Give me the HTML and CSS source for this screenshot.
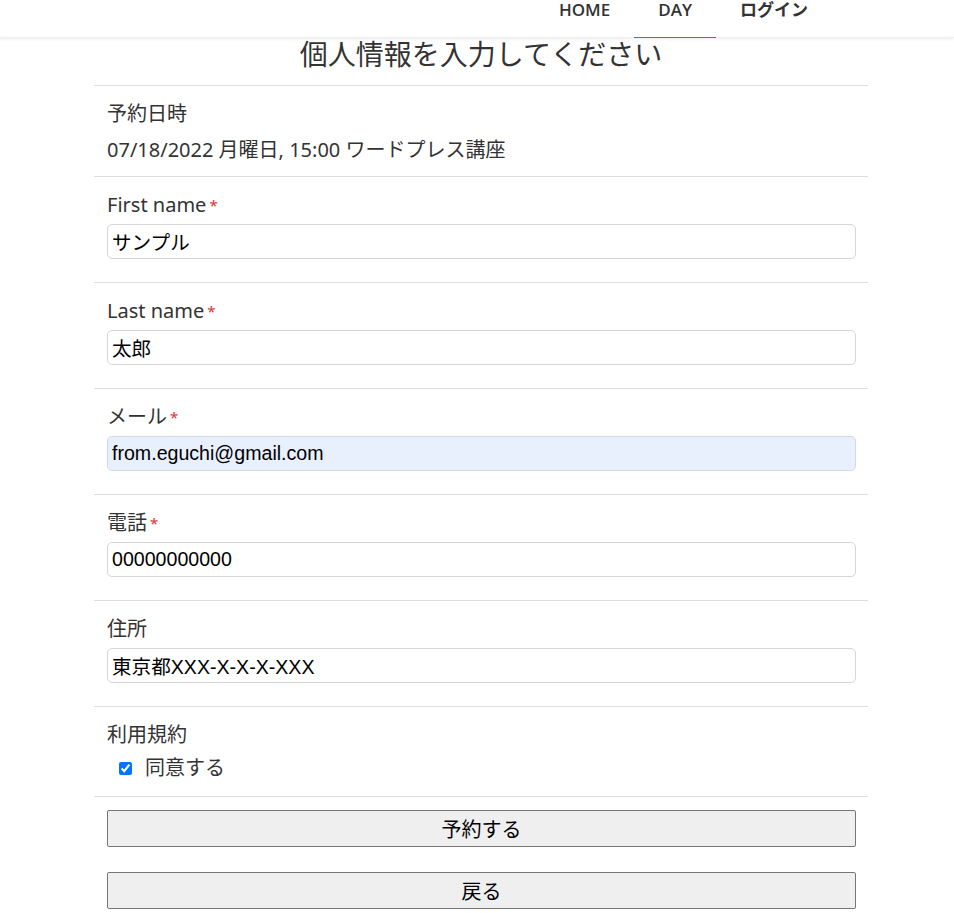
FILE: index.html
```html
<!DOCTYPE html>
<html lang="ja">
<head>
<meta charset="utf-8">
<title>個人情報を入力してください</title>
<link rel="stylesheet" href="styles.css">
</head>
<body>
<header class="site-header">
  <nav class="nav">
    <a class="nav-link" href="#">HOME</a>
    <a class="nav-link active" href="#">DAY</a>
    <a class="nav-link" href="#">ログイン</a>
  </nav>
</header>
<main class="page">
  <h1 class="title">個人情報を入力してください</h1>
  <form class="form">
    <div class="row">
      <div class="label">予約日時</div>
      <div class="value">07/18/2022 月曜日, 15:00 ワードプレス講座</div>
    </div>
    <div class="row field">
      <label class="label">First name<span class="req">*</span></label>
      <input class="input" type="text" value="サンプル">
    </div>
    <div class="row field">
      <label class="label">Last name<span class="req">*</span></label>
      <input class="input" type="text" value="太郎">
    </div>
    <div class="row field">
      <label class="label">メール<span class="req">*</span></label>
      <input class="input autofill" type="text" value="from.eguchi@gmail.com">
    </div>
    <div class="row field">
      <label class="label">電話<span class="req">*</span></label>
      <input class="input" type="text" value="00000000000">
    </div>
    <div class="row field">
      <label class="label">住所</label>
      <input class="input" type="text" value="東京都XXX-X-X-X-XXX">
    </div>
    <div class="row terms">
      <div class="label">利用規約</div>
      <label class="check"><input type="checkbox" checked><span>同意する</span></label>
    </div>
    <div class="actions">
      <button type="button" class="btn">予約する</button>
      <button type="button" class="btn">戻る</button>
    </div>
  </form>
</main>
</body>
</html>
```

FILE: styles.css
```css
html, body {
  margin: 0;
  padding: 0;
  background: #fff;
}
body {
  font-family: "Noto Sans", "Noto Sans CJK JP", sans-serif;
  color: #333;
}
.site-header {
  height: 38px;
  background: #fff;
  box-shadow: 0 1px 3px rgba(0, 0, 0, 0.08);
  display: flex;
  justify-content: flex-end;
  padding-right: 122px;
  box-sizing: border-box;
  border-bottom: 1px solid #f0f0f0;
}
.nav {
  display: flex;
}
.nav-link {
  display: block;
  height: 38px;
  box-sizing: border-box;
  padding: 1px 24px 0;
  line-height: 17px;
  font-family: "Open Sans", "Noto Sans CJK JP", sans-serif;
  font-size: 17px;
  font-weight: 600;
  color: #333;
  text-decoration: none;
}
.nav-link.active {
  border-bottom: 1px solid #4b7893;
}
.page {
  width: 774px;
  margin: 0 auto 0 94px;
}
.title {
  margin: 0 0 15px;
  font-size: 28px;
  line-height: 32px;
  font-weight: 400;
  text-align: center;
  color: #333;
}
.form {
  border-top: 1px solid #ddd;
}
.row {
  border-bottom: 1px solid #ddd;
  padding: 15px 12px 13px 13px;
}
.row.field {
  padding-bottom: 23px;
}
.label {
  display: block;
  font-size: 20px;
  line-height: 26px;
  color: #333;
}
.field .label {
  margin-bottom: 6px;
}
.value {
  margin-top: 10px;
  font-size: 20px;
  line-height: 26px;
  color: #333;
}
.req {
  color: #d33;
  font-size: 15px;
  margin-left: 3px;
  vertical-align: 1px;
}
.input {
  display: block;
  width: 100%;
  height: 35px;
  box-sizing: border-box;
  border: 1px solid #d6d6d6;
  border-radius: 5px;
  padding: 0 4px;
  font-family: "Liberation Sans", "Noto Sans CJK JP", sans-serif;
  font-size: 19.6px;
  color: #000;
  background: #fff;
}
.input.autofill {
  background: #e8f0fe;
  border-color: #d3d9e3;
}
.terms {
  padding-bottom: 15px;
}
.check {
  display: flex;
  align-items: center;
  margin-top: 7px;
  margin-left: 12px;
  font-size: 20px;
  line-height: 26px;
  color: #333;
}
.check input {
  width: 13px;
  height: 13px;
  margin: 0 13px 0 0;
}
.actions {
  display: flex;
  flex-direction: column;
  gap: 25px;
  padding: 13px 12px 4px 13px;
}
.btn {
  height: 37px;
  background: #efefef;
  border: 1px solid #767676;
  border-radius: 2px;
  font-family: "Noto Sans CJK JP", sans-serif;
  font-size: 20px;
  color: #000;
}
```
